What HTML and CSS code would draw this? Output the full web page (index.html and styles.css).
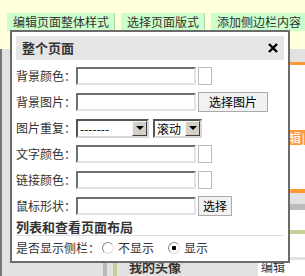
FILE: index.html
```html
<!DOCTYPE html>
<html lang="zh-CN">
<head>
    <meta charset="UTF-8">
    <title>整个页面</title>
    <link rel="stylesheet" href="styles.css">
</head>
<body>
    <div class="page">
        <div class="top">
            <div class="tabs">
                <span class="tab">编辑页面整体样式</span>
                <span class="tab">选择页面版式</span>
                <span class="tab">添加侧边栏内容</span>
            </div>
        </div>
        <div class="main">
            <div class="side"></div>
            <div class="col">
                <div class="c-grey c-h13"></div>
                <div class="c-orange c-h4"></div>
                <div class="c-white c-h67"></div>
                <div class="c-head">[编辑]</div>
                <div class="c-white c-h45"></div>
                <div class="c-orange c-h5"></div>
                <div class="c-grey c-h11"></div>
                <div class="c-dark c-h6"></div>
                <div class="c-white c-h21"></div>
                <div class="box">
                    <div class="c-white c-h23"></div>
                    <div class="box-row">
                        <span class="box-title">我的头像</span>
                        <span class="box-edit">编辑</span>
                    </div>
                </div>
            </div>
        </div>

        <div class="dialog">
            <div class="dlg-title">
                <span>整个页面</span>
                <svg class="close" width="10" height="10" viewBox="0 0 10 10">
                    <path d="M1 1 L9 9 M9 1 L1 9" stroke="#000" stroke-width="2.4" />
                </svg>
            </div>
            <div class="form">
                <div class="row">
                    <span class="lbl">背景颜色：</span>
                    <input type="text" class="txt">
                    <span class="swatch"></span>
                </div>
                <div class="row">
                    <span class="lbl">背景图片：</span>
                    <input type="text" class="txt">
                    <button class="btn btn-wide">选择图片</button>
                </div>
                <div class="row">
                    <span class="lbl">图片重复：</span>
                    <span class="sel sel-wide"><span class="sel-text">-------</span><span class="sel-arrow"><i></i></span></span>
                    <span class="sel sel-small"><span class="sel-text">滚动</span><span class="sel-arrow"><i></i></span></span>
                </div>
                <div class="row">
                    <span class="lbl">文字颜色：</span>
                    <input type="text" class="txt">
                    <span class="swatch"></span>
                </div>
                <div class="row">
                    <span class="lbl">链接颜色：</span>
                    <input type="text" class="txt">
                    <span class="swatch"></span>
                </div>
                <div class="row">
                    <span class="lbl">鼠标形状：</span>
                    <input type="text" class="txt">
                    <button class="btn btn-small">选择</button>
                </div>
            </div>
            <div class="sect">列表和查看页面布局</div>
            <div class="radio-row">
                <span class="lbl-wide">是否显示侧栏：</span>
                <label class="opt"><input type="radio" name="side" class="rad">不显示</label>
                <label class="opt opt-next"><input type="radio" name="side" class="rad" checked>显示</label>
            </div>
        </div>
    </div>
</body>
</html>
```

FILE: styles.css
```css
body {
    margin: 0;
    font-family: "Noto Sans CJK SC", "Noto Sans", sans-serif;
    font-size: 12px;
    line-height: 14px;
    color: #333;
}

.page {
    position: relative;
    height: 276px;
    overflow: hidden;
}

/* page behind the dialog */
.top {
    height: 49px;
    background: #ffffdd;
}

.tabs {
    display: flex;
    gap: 6px;
    padding: 13px 0 0 7px;
    white-space: nowrap;
}

.tab {
    height: 18px;
    line-height: 18px;
    padding: 0 5px 0 6px;
    background: #ccffcc;
    border-right: 1px solid #a8d8a8;
}

.main {
    display: flex;
    height: 227px;
}

.side {
    width: 118px;
    border-left: 2px solid #777;
    background: #e2e2e2;
}

.col {
    flex: 1;
    display: flex;
    flex-direction: column;
    border-left: 4px solid #bbb;
    background: #e2e2e2;
}

.c-grey { background: #e2e2e2; }
.c-dark { background: #bbb; }
.c-white { background: #fff; }
.c-orange { background: #ff9933; }

.c-h4 { height: 4px; }
.c-h5 { height: 5px; }
.c-h6 { height: 6px; }
.c-h11 { height: 11px; }
.c-h13 { height: 13px; }
.c-h21 { height: 21px; }
.c-h23 { height: 23px; }
.c-h45 { height: 45px; }
.c-h67 { height: 67px; }

.c-head {
    height: 15px;
    line-height: 15px;
    padding-left: 166px;
    background: #ff9933;
    color: #fff;
    white-space: nowrap;
}

.box {
    margin-left: 6px;
    border-top: 4px solid #cccc99;
    border-left: 4px solid #cccc99;
}

.box-row {
    display: flex;
    height: 16px;
    padding-top: 3px;
    background: #e2e2e2;
    white-space: nowrap;
}

.box-title {
    padding-left: 12px;
    width: 129px;
    font-weight: bold;
    font-size: 13px;
}

.box-edit {
    background: #fff;
    padding-left: 3px;
    flex: 1;
}

/* dialog */
.dialog {
    position: absolute;
    left: 10px;
    top: 30px;
    width: 280px;
    height: 233px;
    box-sizing: border-box;
    border: 2px solid #6b6b6b;
    background: #fff;
    padding: 4px;
}

.dlg-title {
    display: flex;
    align-items: center;
    justify-content: space-between;
    height: 24px;
    padding: 0 6px;
    background: #e5e5e5;
    font-weight: bold;
    font-size: 13px;
}

.form {
    padding-top: 3px;
}

.row {
    display: flex;
    align-items: center;
    height: 26px;
}

.lbl {
    width: 60px;
}

.txt {
    width: 120px;
    height: 18px;
    box-sizing: border-box;
    margin: 0;
    padding: 0 2px;
    border: 2px solid;
    border-color: #707070 #e3e3e3 #e3e3e3 #707070;
    font: inherit;
}

.swatch {
    width: 14px;
    height: 18px;
    box-sizing: border-box;
    margin-left: 2px;
    border: 1px solid #bbb;
}

.btn {
    height: 20px;
    margin: 0 0 0 2px;
    padding: 0;
    border: 1px solid #aaa;
    background: #f2f2f2;
    font: inherit;
    color: #000;
}

.btn-wide { width: 70px; }
.btn-small { width: 34px; }

.sel {
    display: flex;
    height: 19px;
    box-sizing: border-box;
    border: 2px solid;
    border-color: #555 #d8d8d8 #d8d8d8 #555;
    background: #fff;
    color: #000;
}

.sel-wide { width: 73px; }
.sel-small { width: 49px; margin-left: 4px; }

.sel-text {
    flex: 1;
    padding-left: 2px;
    line-height: 15px;
    white-space: nowrap;
}

.sel-arrow {
    display: flex;
    align-items: center;
    justify-content: center;
    width: 15px;
    box-sizing: border-box;
    background: #d4d0c8;
    border: 1px solid;
    border-color: #f4f4f4 #404040 #404040 #f4f4f4;
}

.sel-arrow i {
    width: 0;
    height: 0;
    border-left: 4px solid transparent;
    border-right: 4px solid transparent;
    border-top: 4px solid #000;
}

.sect {
    display: flex;
    align-items: center;
    height: 16px;
    border-bottom: 1px solid #ddd;
    font-weight: bold;
    font-size: 13px;
}

.radio-row {
    display: flex;
    align-items: center;
    height: 24px;
}

.lbl-wide {
    width: 84px;
}

.opt {
    display: flex;
    align-items: center;
    margin-left: 2px;
}

.opt-next {
    margin-left: 14px;
}

.rad {
    appearance: none;
    width: 12px;
    height: 12px;
    margin: 0 4px 0 0;
    box-sizing: border-box;
    border: 1px solid;
    border-color: #888 #ddd #ddd #888;
    border-radius: 50%;
    background: #fff;
}

.rad:checked {
    background: radial-gradient(circle, #000 0 2px, #fff 2.5px);
}
```
